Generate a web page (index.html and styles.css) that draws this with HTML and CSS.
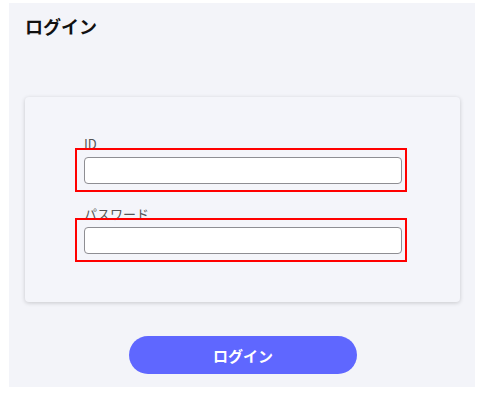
FILE: index.html
```html
<!DOCTYPE html>
<html lang="ja">
<head>
<meta charset="utf-8">
<link rel="stylesheet" href="styles.css">
</head>
<body>
<main class="panel">
  <h1 class="title">ログイン</h1>
  <section class="card">
    <div class="field">
      <label class="label" for="id">ID</label>
      <div class="frame"><input class="input" id="id" type="text"></div>
    </div>
    <div class="field">
      <label class="label" for="pw">パスワード</label>
      <div class="frame"><input class="input" id="pw" type="password"></div>
    </div>
  </section>
  <div class="actions">
    <button class="btn" type="button">ログイン</button>
  </div>
</main>
</body>
</html>
```

FILE: styles.css
```css
html, body {
  margin: 0;
  padding: 0;
  background: #ffffff;
  font-family: "Noto Sans CJK JP", "Noto Sans", sans-serif;
}
.panel {
  margin: 3px 0 0 9px;
  width: 466px;
  height: 384px;
  background: #f3f4f9;
  padding: 0 15px 0 16px;
  box-sizing: border-box;
}
.title {
  margin: 0;
  padding-top: 10px;
  font-size: 18px;
  line-height: 26px;
  font-weight: 700;
  color: #111;
}
.card {
  margin-top: 58px;
  height: 205px;
  background: #f4f5fa;
  border-radius: 4px;
  box-shadow: 0 1px 4px rgba(0,0,0,0.18);
  padding: 40px 0 0 50px;
  box-sizing: border-box;
  display: flex;
  flex-direction: column;
  gap: 15px;
}
.field {
  width: 332px;
}
.label {
  display: block;
  margin-left: 9px;
  font-size: 13px;
  line-height: 13px;
  color: #555;
  margin-bottom: -2px;
}
.frame {
  position: relative;
  border: 2px solid #f00;
  padding: 7px 3px 6px 7px;
}
.input {
  display: block;
  width: 100%;
  height: 27px;
  box-sizing: border-box;
  border: 1px solid #8e8e93;
  border-radius: 4px;
  background: #fff;
  margin: 0;
}
.actions {
  display: flex;
  justify-content: center;
  margin-top: 34px;
}
.btn {
  width: 228px;
  height: 38px;
  border: none;
  border-radius: 19px;
  background: #5f67ff;
  color: #fff;
  font-family: "Noto Sans CJK JP", sans-serif;
  font-size: 15px;
  font-weight: 700;
  margin-left: 1px;
}
```
